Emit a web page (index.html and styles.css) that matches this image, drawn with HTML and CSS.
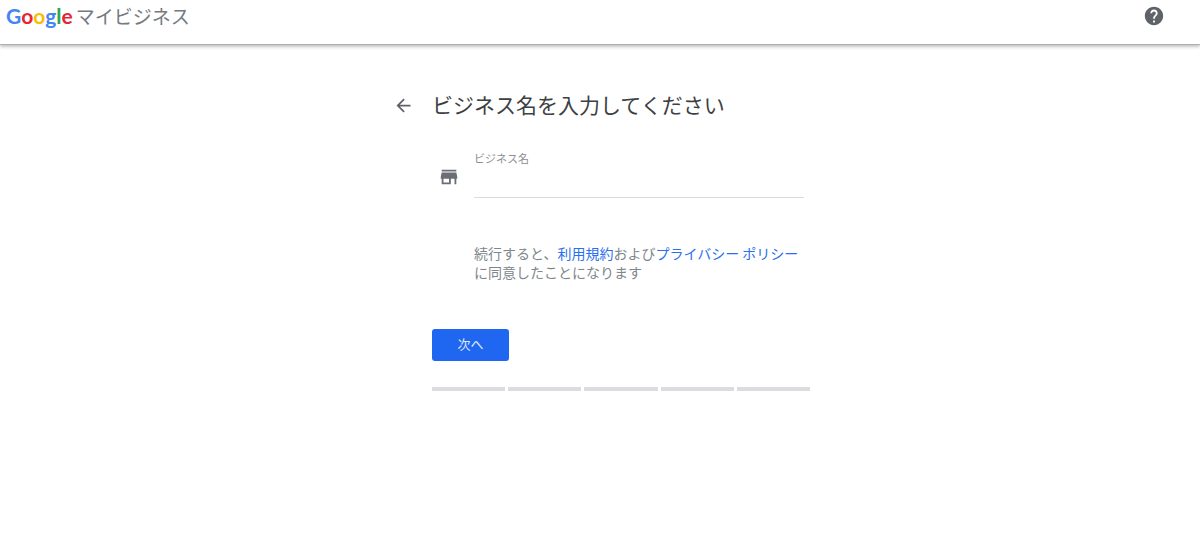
FILE: index.html
```
<!DOCTYPE html>
<html lang="ja">
<head>
  <meta charset="UTF-8">
  <meta name="viewport" content="width=device-width, initial-scale=1.0">
  <title>Google マイビジネス</title>
  <link rel="stylesheet" href="styles.css">
</head>
<body>
  <header class="header">
    <div class="brand">
      <span class="logo"><span class="blue">G</span><span class="red">o</span><span class="yellow">o</span><span class="blue">g</span><span class="green">l</span><span class="red">e</span></span>
      <span class="product">マイビジネス</span>
    </div>
    <button type="button" class="icon-button" aria-label="ヘルプ">
      <svg viewBox="0 0 24 24" width="22" height="22"><path d="M12 2C6.48 2 2 6.48 2 12s4.48 10 10 10 10-4.48 10-10S17.52 2 12 2zm1 17h-2v-2h2v2zm2.07-7.75l-.9.92C13.45 12.9 13 13.5 13 15h-2v-.5c0-1.1.45-2.1 1.17-2.83l1.24-1.26c.37-.36.59-.86.59-1.41 0-1.1-.9-2-2-2s-2 .9-2 2H8c0-2.21 1.79-4 4-4s4 1.79 4 4c0 .88-.36 1.68-.93 2.25z"/></svg>
    </button>
  </header>

  <main class="container">
    <div class="title">
      <button type="button" class="icon-button back" aria-label="戻る">
        <svg viewBox="0 0 24 24" width="21" height="21"><path d="M20 11H7.83l5.59-5.59L12 4l-8 8 8 8 1.41-1.41L7.83 13H20v-2z"/></svg>
      </button>
      <h1>ビジネス名を入力してください</h1>
    </div>

    <form class="form">
      <div class="row">
        <svg class="store" viewBox="0 0 24 24" width="22" height="22"><path d="M20 4H4v2h16V4zm1 10v-2l-1-5H4l-1 5v2h1v6h10v-6h4v6h2v-6h1zm-9 4H6v-4h6v4z"/></svg>
        <div class="field">
          <label for="businessName">ビジネス名</label>
          <input type="text" id="businessName" name="businessName">
        </div>
      </div>

      <p class="terms">続行すると、<a href="#">利用規約</a>および<a href="#">プライバシー ポリシー</a>に同意したことになります</p>

      <button type="submit" class="next">次へ</button>

      <div class="steps">
        <span></span>
        <span></span>
        <span></span>
        <span></span>
        <span></span>
      </div>
    </form>
  </main>
</body>
</html>
```
FILE: styles.css
```
* {
  box-sizing: border-box;
}
body {
  margin: 0;
  background: #fff;
  color: #3c4043;
  font-family: "Noto Sans CJK JP", sans-serif;
  font-size: 14px;
}
.header {
  display: flex;
  justify-content: space-between;
  align-items: flex-start;
  height: 45px;
  padding: 0 35px 0 6px;
  border-bottom: 1px solid #b0b0b0;
  box-shadow: 0 1px 4px rgba(0, 0, 0, 0.35);
}
.brand {
  display: flex;
  align-items: baseline;
  gap: 3px;
  line-height: 32px;
}
.logo {
  font-family: Lato, sans-serif;
  font-size: 21px;
  font-weight: bold;
}
.product {
  color: #757a7f;
  font-size: 19px;
}
.blue {
  color: #4285f4;
}
.red {
  color: #ea2533;
}
.yellow {
  color: #fbbc05;
}
.green {
  color: #2aa850;
}
.icon-button {
  display: flex;
  padding: 0;
  border: none;
  background: none;
  cursor: pointer;
}
.icon-button svg {
  fill: #5f6368;
}
.header .icon-button {
  padding-top: 5px;
}
.container {
  max-width: 420px;
  margin: 0 auto;
  padding-top: 44px;
}
.title {
  display: flex;
  align-items: center;
}
.back {
  width: 42px;
  padding: 2px 0 0 3px;
}
h1 {
  margin: 0;
  font-size: 21px;
  font-weight: normal;
  line-height: 30px;
}
.form {
  padding-left: 42px;
}
.row {
  display: flex;
  align-items: flex-end;
  gap: 14px;
  margin-top: 31px;
  padding: 0 6px;
}
.store {
  flex: none;
  margin-bottom: 10px;
  fill: #6b6f74;
}
.field {
  flex: 1;
}
label {
  display: block;
  color: #8a8d91;
  font-size: 11px;
  line-height: 16px;
}
input {
  display: block;
  width: 100%;
  height: 32px;
  padding: 0;
  border: none;
  border-bottom: 1px solid #dadce0;
  font: inherit;
  outline: none;
}
.terms {
  margin: 46px 6px 0 42px;
  color: #80868b;
  line-height: 19px;
}
a {
  color: #2a6ff0;
  text-decoration: none;
}
.next {
  display: block;
  width: 77px;
  height: 32px;
  margin-top: 47px;
  padding: 0 0 3px;
  border: none;
  border-radius: 3px;
  background: #1f66f0;
  color: #e0eafd;
  font-family: inherit;
  font-size: 13px;
  cursor: pointer;
}
.steps {
  display: flex;
  gap: 3px;
  margin-top: 26px;
}
.steps span {
  flex: 1;
  height: 4px;
  background: #dadce0;
}
```
